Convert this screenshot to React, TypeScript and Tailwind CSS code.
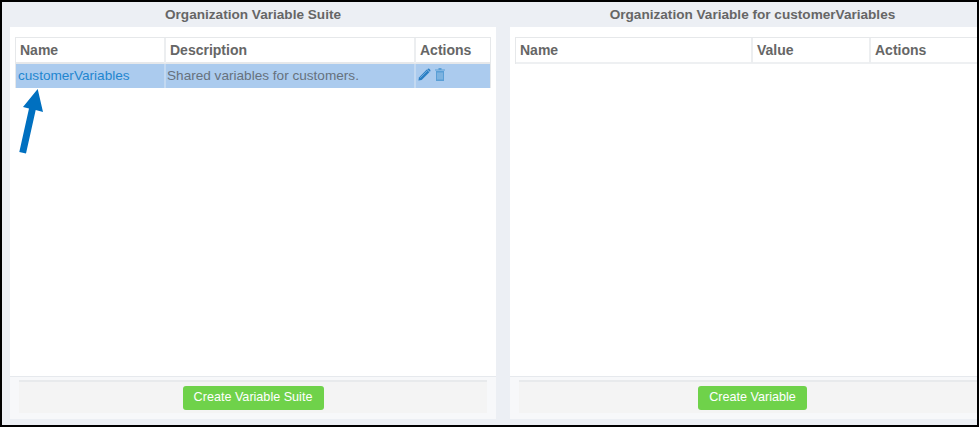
const FONT = "font-['Liberation_Sans',Arial,sans-serif]";

function PencilIcon() {
  return (
    <svg width="13" height="13" viewBox="0 0 13 13" className="shrink-0">
      <path d="M0.4 12.6 L1 9.4 L8.8 1.6 L11.4 4.2 L3.6 12 Z" fill="#2a7fc4" />
      <path d="M2.2 9.8 L9.2 2.8" stroke="#7fb2e0" strokeWidth="0.8" />
      <path d="M9.6 0.9 Q10.4 0.2 11.2 0.8 L12.2 1.8 Q12.8 2.6 12.2 3.4 L11.8 3.8 L9.2 1.2 Z" fill="#2a7fc4" />
    </svg>
  );
}

function TrashIcon() {
  return (
    <svg width="10" height="13" viewBox="0 0 10 13" className="shrink-0">
      <path d="M0 1.4 H10 V2.4 H0 Z M3.5 0 H6.5 V1.4 H3.5 Z" fill="#5a9fd6" />
      <path d="M1 3 H9 V13 H1 Z" fill="#5a9fd6" />
      <path d="M3 4.5 V11.5 M5 4.5 V11.5 M7 4.5 V11.5" stroke="#a9cbec" strokeWidth="0.9" />
    </svg>
  );
}

function Arrow() {
  return (
    <svg width="30" height="70" viewBox="0 0 30 70" className="absolute left-[14px] top-[85px]">
      <path d="M21.7 2 L7 20 L13 21.5 L3.3 65 L10 66.5 L19.7 23 L27 25 Z" fill="#0070c0" />
    </svg>
  );
}

function HeaderCell({ label, width }: { label: string; width: string }) {
  return (
    <div className={`${width} flex h-[25px] items-center border-r-2 border-[#eceef0] pl-[4px] text-[14px] font-bold text-[#666] last:border-r-0`}>
      {label}
    </div>
  );
}

function Footer({ label, buttonWidth }: { label: string; buttonWidth: string }) {
  return (
    <div className="border-t border-[#e6e9ed] bg-[#f7f8fa] px-[9px] pt-[3px] pb-[6px]">
      <div className="flex h-[33px] items-center justify-center border-t-2 border-[#e8eaec] bg-[#f4f4f4]">
        <button className={`${buttonWidth} h-[24px] rounded-[3px] bg-[#6fd24a] text-[12.6px] text-white`}>{label}</button>
      </div>
    </div>
  );
}

export default function App() {
  return (
    <div className={`${FONT} relative h-[427px] w-[979px] overflow-hidden border-2 border-black bg-[#eceff4]`}>
      <Arrow />
      <div className="flex h-full pl-[8px]">
        {/* Suite panel */}
        <div className="flex w-[486px] shrink-0 flex-col pb-[6px]">
          <div className="flex h-[25px] shrink-0 items-center justify-center pt-[2px] text-[13.6px] font-bold text-[#666]">
            Organization Variable Suite
          </div>
          <div className="flex min-h-0 flex-1 flex-col bg-white">
            <div className="flex-1 px-[5px] pt-[10px]">
              <div className="border border-b-0 border-[#e6e8ea]">
                <div className="flex h-[26px] border-b-2 border-[#e6e8ea]">
                  <HeaderCell label="Name" width="w-[150px]" />
                  <HeaderCell label="Description" width="w-[250px]" />
                  <HeaderCell label="Actions" width="flex-1" />
                </div>
                <div className="flex h-[24px] bg-[#abcbee] text-[13.6px]">
                  <div className="flex w-[150px] items-center border-r-2 border-[#c3d9f1] pl-[2px] text-[#1f86d0]">customerVariables</div>
                  <div className="flex w-[250px] items-center border-r-2 border-[#c3d9f1] pl-[1px] text-[#66717d]">Shared variables for customers.</div>
                  <div className="flex flex-1 items-center gap-[4px] pb-[4px] pl-[2px]">
                    <PencilIcon />
                    <TrashIcon />
                  </div>
                </div>
              </div>
            </div>
            <Footer label="Create Variable Suite" buttonWidth="w-[141px]" />
          </div>
        </div>
        {/* Variable panel runs past the window's right edge */}
        <div className="ml-[14px] flex w-[485px] shrink-0 flex-col pb-[6px]">
          <div className="flex h-[25px] shrink-0 items-center justify-center pt-[2px] text-[13.6px] font-bold text-[#666]">
            Organization Variable for customerVariables
          </div>
          <div className="flex min-h-0 flex-1 flex-col bg-white">
            <div className="flex-1 pl-[5px] pt-[10px]">
              <div className="border-t border-l border-[#e6e8ea]">
                <div className="flex h-[26px] border-b-2 border-[#eef0f2]">
                  <HeaderCell label="Name" width="w-[237px]" />
                  <HeaderCell label="Value" width="w-[118px]" />
                  <HeaderCell label="Actions" width="flex-1" />
                </div>
              </div>
            </div>
            <Footer label="Create Variable" buttonWidth="w-[109px]" />
          </div>
        </div>
      </div>
    </div>
  );
}
